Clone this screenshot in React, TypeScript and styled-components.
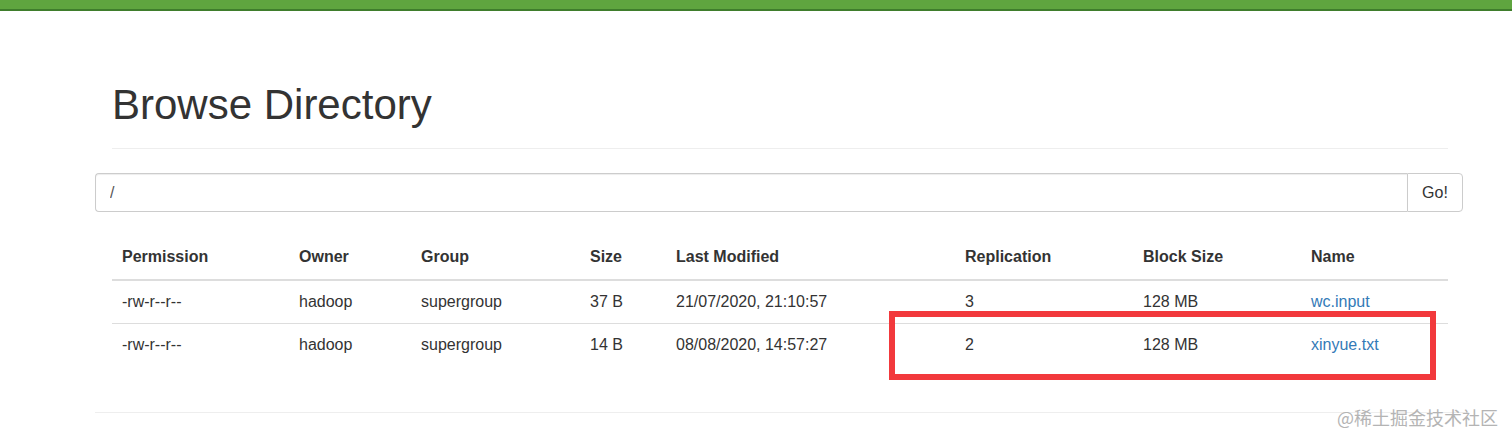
import React from "react";
import styled, { createGlobalStyle } from "styled-components";

const GlobalStyle = createGlobalStyle`
  html, body {
    margin: 0;
    padding: 0;
    background: #fff;
  }
  body {
    font-family: "Liberation Sans", Arial, sans-serif;
    color: #333;
  }
`;

const TopBar = styled.div`
  height: 9px;
  background: #5fa53f;
  border-bottom: 2px solid #3f7d2c;
`;

const Page = styled.div`
  position: relative;
  width: 1368px;
  margin-left: 95px;
  padding-top: 71px;
`;

const Header = styled.div`
  margin: 0 15px 0 17px;
  padding-bottom: 20px;
  border-bottom: 1px solid #eee;
  & > h1 {
    margin: 0;
    font-size: 42px;
    font-weight: 500;
    line-height: 1.1;
    color: #333;
  }
`;

const InputGroup = styled.div`
  display: flex;
  margin-top: 24px;
  height: 39px;
`;

const PathInput = styled.input`
  flex: 1;
  border: 1px solid #ccc;
  border-right: none;
  border-radius: 4px 0 0 4px;
  padding: 0 14px;
  font-family: "Liberation Sans", Arial, sans-serif;
  font-size: 16px;
  color: #555;
  box-shadow: inset 0 1px 1px rgba(0, 0, 0, 0.075);
  outline: none;
`;

const GoButton = styled.button`
  width: 56px;
  border: 1px solid #ccc;
  border-radius: 0 4px 4px 0;
  background: #fff;
  font-family: "Liberation Sans", Arial, sans-serif;
  font-size: 16px;
  color: #333;
`;

const Table = styled.table`
  margin: 23px 15px 0 17px;
  width: 1336px;
  table-layout: fixed;
  border-collapse: collapse;
  font-size: 16px;
`;

const Th = styled.th<{ w: number }>`
  box-sizing: border-box;
  width: ${(p) => p.w}px;
  text-align: left;
  font-weight: bold;
  padding: 10px;
  line-height: 24px;
  border-bottom: 2px solid #ddd;
`;

const Td = styled.td`
  padding: 9px 10px;
  line-height: 24px;
  border-top: 1px solid #ddd;
`;

const Row = styled.tr`
  &:first-child > td {
    border-top: none;
  }
`;

const FileLink = styled.a`
  color: #337ab7;
  text-decoration: none;
`;

const Rule = styled.hr`
  margin: 46px 0 0;
  border: 0;
  border-top: 1px solid #eee;
`;

const Annotation = styled.div`
  position: absolute;
  left: 794px;
  top: 300px;
  width: 535px;
  height: 57px;
  border: 6px solid #f2393c;
  pointer-events: none;
`;

const Watermark = styled.div`
  position: absolute;
  left: 1337px;
  top: 407px;
  font-family: "Noto Sans CJK SC", "Liberation Sans", sans-serif;
  font-size: 18px;
  line-height: 20px;
  color: #b4b4b4;
`;

const columns: [string, number][] = [
  ["Permission", 177],
  ["Owner", 122],
  ["Group", 169],
  ["Size", 86],
  ["Last Modified", 289],
  ["Replication", 178],
  ["Block Size", 168],
  ["Name", 147],
];

const files = [
  ["-rw-r--r--", "hadoop", "supergroup", "37 B", "21/07/2020, 21:10:57", "3", "128 MB", "wc.input"],
  ["-rw-r--r--", "hadoop", "supergroup", "14 B", "08/08/2020, 14:57:27", "2", "128 MB", "xinyue.txt"],
];

export default function App() {
  return (
    <>
      <GlobalStyle />
      <TopBar />
      <Page>
        <Header>
          <h1>Browse Directory</h1>
        </Header>
        <InputGroup>
          <PathInput defaultValue="/" />
          <GoButton>Go!</GoButton>
        </InputGroup>
        <Table>
          <thead>
            <tr>
              {columns.map(([name, w]) => (
                <Th key={name} w={w}>{name}</Th>
              ))}
            </tr>
          </thead>
          <tbody>
            {files.map((f) => (
              <Row key={f[7]}>
                {f.slice(0, 7).map((v, i) => (
                  <Td key={i}>{v}</Td>
                ))}
                <Td>
                  <FileLink href="#">{f[7]}</FileLink>
                </Td>
              </Row>
            ))}
          </tbody>
        </Table>
        <Rule />
        <Annotation />
      </Page>
      <Watermark>@稀土掘金技术社区</Watermark>
    </>
  );
}
